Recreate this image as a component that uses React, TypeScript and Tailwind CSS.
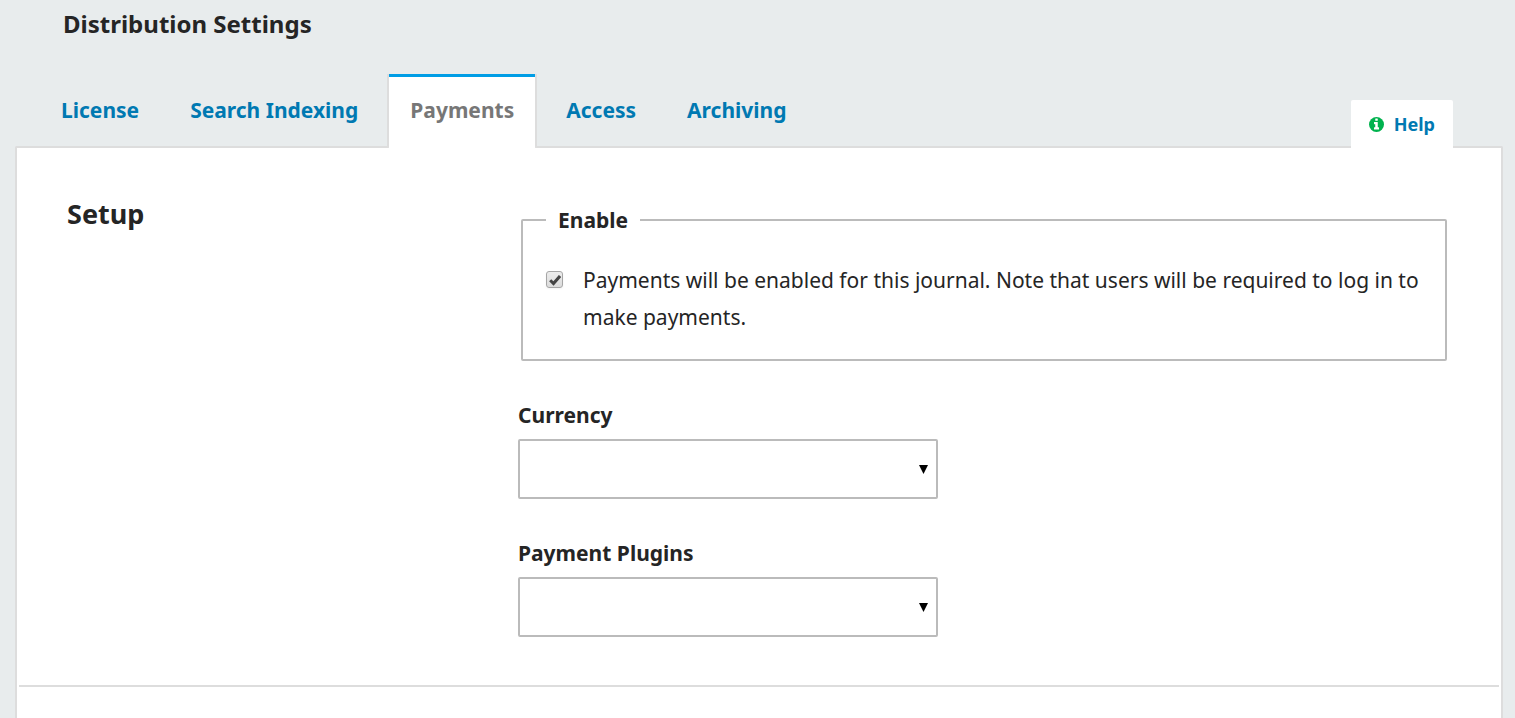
const tabs = ["License", "Search Indexing", "Payments", "Access", "Archiving"];

function Tab({ name, active }: { name: string; active: boolean }) {
  return (
    <li
      className={
        active
          ? "relative z-10 -mb-[2px] rounded-b-xs border-x-2 border-[#ddd] bg-white"
          : "border-x-2 border-transparent"
      }
    >
      <a
        href="#"
        aria-current={active ? "page" : undefined}
        className={
          active
            ? "block h-[74px] border-t-3 border-[#009de5] px-[21px] pt-[15px] leading-9 text-[#777]"
            : "block h-[72px] px-5 pt-[18px] leading-9 text-[#0079b2]"
        }
      >
        {name}
      </a>
    </li>
  );
}

function HelpLink() {
  return (
    <a
      href="#"
      className="relative z-10 -mb-[2px] flex h-12 items-center gap-[10px] rounded-t-xs bg-white px-[18px] text-[18px] leading-6 font-bold text-[#0079b2]"
    >
      <svg viewBox="0 0 1536 1536" className="size-[15px]" aria-hidden="true">
        <circle cx="768" cy="768" r="768" fill="#00b24e" />
        <path
          fill="#fff"
          d="M1024 1248v-160q0-14-9-23t-23-9h-96V544q0-14-9-23t-23-9H544q-14 0-23 9t-9 23v160q0 14 9 23t23 9h96v320h-96q-14 0-23 9t-9 23v160q0 14 9 23t23 9h448q14 0 23-9t9-23zM896 352V192q0-14-9-23t-23-9H672q-14 0-23 9t-9 23v160q0 14 9 23t23 9h192q14 0 23-9t9-23z"
        />
      </svg>
      Help
    </a>
  );
}

function SelectField({ id, label }: { id: string; label: string }) {
  return (
    <div>
      <label htmlFor={id} className="block text-[21px] leading-9 font-bold">
        {label}
      </label>
      <div className="mt-[6px] grid w-[420px] max-w-full items-center">
        <select
          id={id}
          className="col-start-1 row-start-1 h-[60px] w-full appearance-none rounded-xs border-2 border-[#bbb] bg-white px-3 text-[21px]"
        >
          <option value=""></option>
        </select>
        <svg
          viewBox="0 0 9 9"
          className="pointer-events-none col-start-1 row-start-1 mr-[10px] size-[9px] justify-self-end"
          aria-hidden="true"
        >
          <path d="M0 0h9L4.5 9z" fill="#000" />
        </svg>
      </div>
    </div>
  );
}

export default function App() {
  return (
    <div className="flex min-h-screen flex-col bg-[#e8eced] pr-3 pl-[15px] font-['Noto_Sans','Open_Sans',sans-serif] text-[#252525]">
      <h1 className="pt-[6px] pl-12 text-[24px] leading-9 font-bold">Distribution Settings</h1>

      <div className="mt-8 flex items-end justify-between pr-[50px] pl-6">
        <ul className="flex items-end gap-[7px] text-[21px] font-bold">
          {tabs.map((name) => (
            <Tab key={name} name={name} active={name === "Payments"} />
          ))}
        </ul>
        <HelpLink />
      </div>

      <main className="flex-1 rounded-t-xs border-2 border-b-0 border-[#ddd] bg-white px-[2px]">
        <section className="grid grid-cols-[451px_1fr] border-b-2 border-[#ddd] pt-12 pr-[52px] pb-12 pl-12">
          <h2 className="text-[27px] leading-9 font-bold">Setup</h2>
          <div className="flex flex-col gap-9 pt-[6px]">
            <fieldset className="ml-[3px] rounded-xs border-2 border-[#bbb] px-[23px] pb-[23px]">
              <legend className="px-3 text-[21px] leading-9 font-bold">Enable</legend>
              <div className="flex gap-5 pt-6">
                <span className="mt-[9px] grid size-[17px] shrink-0 place-items-center">
                  <input
                    id="payments-enabled"
                    type="checkbox"
                    defaultChecked
                    className="peer col-start-1 row-start-1 size-[17px] appearance-none rounded-[3px] border border-[#a6a6a6] bg-linear-to-b from-[#ececec] to-[#dcdcdc] shadow-xs"
                  />
                  <svg
                    viewBox="0 0 12 12"
                    className="pointer-events-none invisible col-start-1 row-start-1 size-3 peer-checked:visible"
                    aria-hidden="true"
                  >
                    <path d="M1.2 6.2l3.3 3.3L11 2" fill="none" stroke="#444" strokeWidth="3" />
                  </svg>
                </span>
                <label htmlFor="payments-enabled" className="text-[21px] leading-[37px]">
                  Payments will be enabled for this journal. Note that users will be required to log in to make
                  payments.
                </label>
              </div>
            </fieldset>
            <SelectField id="currency" label="Currency" />
            <SelectField id="payment-plugins" label="Payment Plugins" />
          </div>
        </section>
      </main>
    </div>
  );
}
